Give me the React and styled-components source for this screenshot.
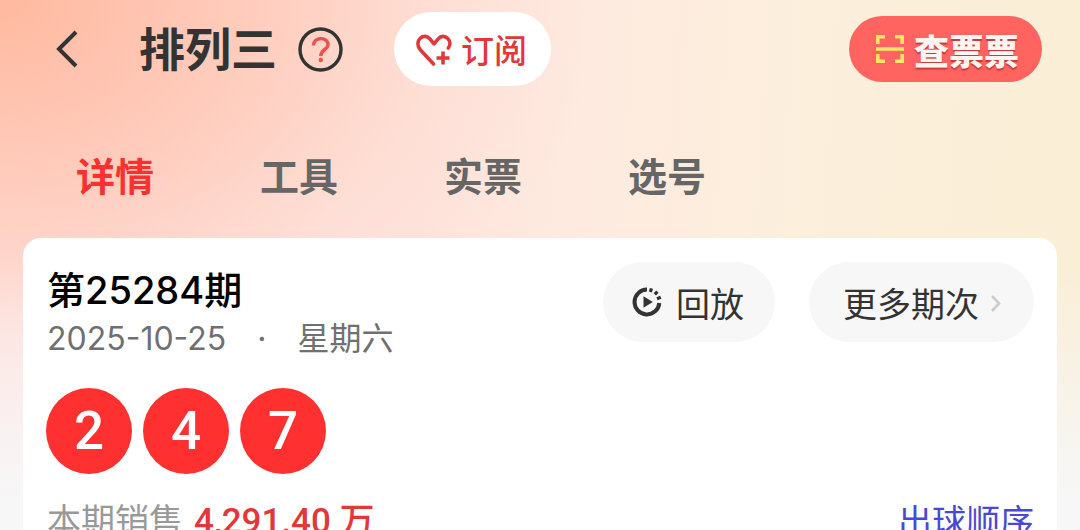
import styled, { createGlobalStyle } from "styled-components";

const GlobalStyle = createGlobalStyle`
  * {
    box-sizing: border-box;
  }
  html {
    scrollbar-width: none;
  }
  body {
    margin: 0;
    font-family: Inter, "Noto Sans CJK SC", sans-serif;
    color: #333;
  }
  button {
    border: none;
    padding: 0;
    background: none;
    font-family: inherit;
    color: inherit;
    cursor: pointer;
  }
  svg {
    display: block;
    flex-shrink: 0;
  }
`;

const Page = styled.div`
  min-height: 100vh;
  padding: 12px 23px 0;
  background:
    linear-gradient(180deg, rgba(247, 247, 248, 0) 260px, #f7f7f8 500px),
    radial-gradient(ellipse 600px 440px at 0 0, #ffb99f 0%, rgba(255, 190, 168, 0.65) 40%, rgba(255, 205, 190, 0.25) 75%, rgba(255, 225, 215, 0) 100%),
    linear-gradient(94deg, #fee4e2 0%, #fee5de 38%, #feecdf 58%, #fbefdb 76%, #f9eed5 100%);
`;

const Header = styled.header`
  display: flex;
  align-items: center;
  padding: 0 15px 0 30px;
`;

const BackButton = styled.button`
  margin-right: 59px;
`;

const Title = styled.h1`
  margin: 0 21px 0 0;
  font-size: 46px;
  line-height: 60px;
  font-weight: 700;
`;

const HelpButton = styled.button`
  width: 45px;
  height: 45px;
  margin-right: 51px;
`;

const SubscribeButton = styled.button`
  display: flex;
  align-items: center;
  gap: 8px;
  height: 74px;
  padding: 0 24px 0 21px;
  border-radius: 37px;
  background-color: #fff;
  color: #e2383a;
  font-size: 33px;
  font-weight: 500;
`;

const CheckButton = styled.button`
  display: flex;
  align-items: center;
  gap: 10px;
  height: 66px;
  margin-left: auto;
  padding: 0 23px 0 27px;
  border-radius: 33px;
  background-color: #ff6460;
  color: #fff5f0;
  font-size: 35px;
  font-weight: 900;
  text-shadow: 0 2px 1px #c93a3a;
`;

const Tabs = styled.nav`
  display: flex;
  gap: 106px;
  padding: 61px 53px 31px;
`;

const Tab = styled.a`
  color: ${(props) => (props.$active ? "#fb3030" : "#666")};
  font-size: 39px;
  line-height: 60px;
  font-weight: 700;
  text-decoration: none;
`;

const Card = styled.main`
  padding: 24px 23px 30px;
  border-radius: 18px;
  background-color: #fff;
`;

const CardTop = styled.div`
  display: flex;
  justify-content: space-between;
  align-items: flex-start;
`;

const Issue = styled.h2`
  margin: 0;
  padding-left: 1px;
  color: #000;
  font-size: 38px;
  line-height: 56px;
  font-weight: 500;
`;

const IssueDate = styled.p`
  display: flex;
  gap: 31px;
  margin: 0;
  padding-left: 1px;
  color: #707070;
  font-size: 32px;
  line-height: 42px;
`;

const Actions = styled.div`
  display: flex;
  gap: 34px;
`;

const PillButton = styled.button`
  display: flex;
  align-items: center;
  gap: ${(props) => props.$gap};
  height: 80px;
  padding: 0 31px 0 ${(props) => props.$left};
  border-radius: 40px;
  background-color: #f7f7f7;
  font-size: 34px;
`;

const Balls = styled.div`
  display: flex;
  gap: 11px;
  margin-top: 28px;
`;

const Ball = styled.span`
  display: flex;
  align-items: center;
  justify-content: center;
  width: 86px;
  height: 86px;
  border-radius: 50%;
  background-color: #ff3030;
  color: #fff;
  font-family: Roboto, sans-serif;
  font-size: 53px;
  font-weight: 500;
`;

const Sales = styled.div`
  display: flex;
  justify-content: space-between;
  align-items: center;
  margin-top: 22px;
  padding-left: 1px;
  font-size: 34px;
  line-height: 50px;
`;

const SalesText = styled.p`
  margin: 0;
  color: #999;
`;

const Amount = styled.strong`
  margin-left: 11px;
  color: #e2383a;
  font-family: Roboto, "Noto Sans CJK SC", sans-serif;
  font-size: 35px;
  font-weight: 500;
`;

const OrderLink = styled.a`
  color: #4a48d8;
  text-decoration: none;
`;

const tabs = ["详情", "工具", "实票", "选号"];
const numbers = [2, 4, 7];

const BackIcon = () => (
  <svg width="27" height="40" viewBox="0 0 27 40" fill="none" stroke="#333" strokeWidth="4">
    <path d="M23 3 L6 20 L23 37" />
  </svg>
);

const HelpIcon = () => (
  <svg width="45" height="45" viewBox="0 0 45 45" fill="none">
    <circle cx="22.5" cy="22.5" r="20.5" stroke="#333" strokeWidth="3.4" />
    <path
      d="M15.5 18.5 C15.5 9.5 30 9.5 30 17.5 C30 22.5 22.8 22.5 22.8 29"
      stroke="#ee5050"
      strokeWidth="3.4"
    />
    <circle cx="22.8" cy="33" r="2.2" fill="#ee5050" />
  </svg>
);

const HeartPlusIcon = () => (
  <svg width="38" height="34" viewBox="0 0 38 34" fill="none" stroke="#e2383a" strokeWidth="3.6">
    <path
      d="M18.5 32 L5.5 18 C2 14 2.2 9 5.2 6.2 C8.2 3.5 12.2 3.8 14.8 6.8 L19 11.8 L23.2 6.8 C26 3.6 30 3.6 32.8 6.4 C35.3 9 35.6 13 33.3 16"
      strokeLinejoin="round"
      strokeLinecap="round"
    />
    <path d="M21.5 26 H34.5 M28 19.5 V32.5" />
  </svg>
);

const ScanIcon = () => (
  <svg width="28" height="28" viewBox="0 0 28 28" fill="none" stroke="#ffe566" strokeWidth="3.6">
    <path d="M1.8 9 V1.8 H9 M19 1.8 H26.2 V9 M26.2 19 V26.2 H19 M9 26.2 H1.8 V19 M0 14 H28" />
  </svg>
);

const ReplayIcon = () => (
  <svg width="30" height="30" viewBox="0 0 30 30" fill="none" stroke="#333" strokeWidth="4">
    <path d="M15 2.6 A12.4 12.4 0 1 0 27.3 16" />
    <path d="M18.4 5 L19.4 1.4 M22.8 7.4 L25.4 4.6 M25 11.8 L28.8 10.2" strokeWidth="3.2" />
    <path d="M11.5 9.2 L20.8 15 L11.5 20.8 Z" fill="#333" stroke="none" />
  </svg>
);

const ArrowIcon = () => (
  <svg width="13" height="20" viewBox="0 0 13 20" fill="none" stroke="#ccc" strokeWidth="2.6">
    <path d="M2 4 L9 11.5 L2 19" />
  </svg>
);

const App = () => {
  return (
    <>
      <GlobalStyle />
      <Page>
        <Header>
          <BackButton aria-label="返回">
            <BackIcon />
          </BackButton>
          <Title>排列三</Title>
          <HelpButton aria-label="帮助">
            <HelpIcon />
          </HelpButton>
          <SubscribeButton>
            <HeartPlusIcon />
            订阅
          </SubscribeButton>
          <CheckButton>
            <ScanIcon />
            查票票
          </CheckButton>
        </Header>
        <Tabs>
          {tabs.map((tab, i) => (
            <Tab key={tab} href="#" $active={i === 0}>
              {tab}
            </Tab>
          ))}
        </Tabs>
        <Card>
          <CardTop>
            <div>
              <Issue>第25284期</Issue>
              <IssueDate>
                <span>2025-10-25</span>
                <span>·</span>
                <span>星期六</span>
              </IssueDate>
            </div>
            <Actions>
              <PillButton $gap="14px" $left="29px">
                <ReplayIcon />
                回放
              </PillButton>
              <PillButton $gap="11px" $left="34px">
                更多期次
                <ArrowIcon />
              </PillButton>
            </Actions>
          </CardTop>
          <Balls>
            {numbers.map((number) => (
              <Ball key={number}>{number}</Ball>
            ))}
          </Balls>
          <Sales>
            <SalesText>
              本期销售
              <Amount>4,291.40 万</Amount>
            </SalesText>
            <OrderLink href="#">出球顺序</OrderLink>
          </Sales>
        </Card>
      </Page>
    </>
  );
};

export default App;
